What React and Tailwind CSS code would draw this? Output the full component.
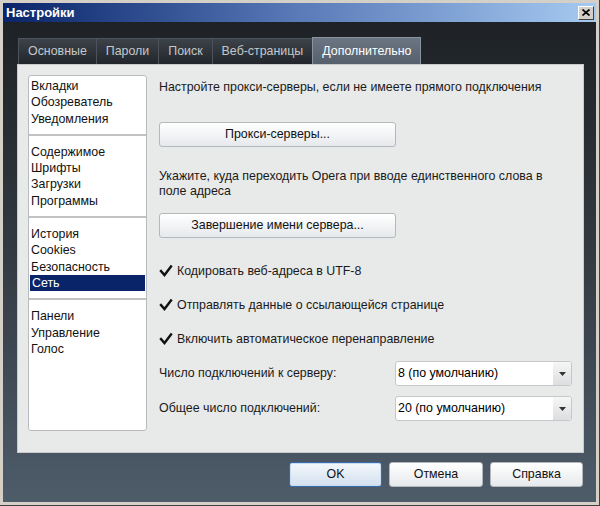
import React from "react";

const font = { fontFamily: '"Liberation Sans", Arial, sans-serif' };

function Tab({ label, active }) {
  return (
    <div
      className={
        active
          ? "h-[28px] -mb-px px-[9px] flex items-center border border-[#8a94a0] border-b-0 bg-gradient-to-b from-[#6c7682] to-[#555f6b] text-white text-[12.4px]"
          : "h-[26px] px-[9px] flex items-center border border-[#4c535c] border-b-0 border-r-0 bg-gradient-to-b from-[#3d434a] to-[#22262b] text-[#c4c8cc] text-[12.4px]"
      }
    >
      {label}
    </div>
  );
}

function Btn({ children, w, primary }) {
  return (
    <div
      className={
        "h-[25px] flex items-center justify-center rounded-[3px] text-[12.4px] text-[#111] border " +
        (primary
          ? "border-[#3a6aa8] bg-gradient-to-b from-[#f4f8fc] to-[#d3e0ef] shadow-[inset_0_0_0_1px_#c8dcf4]"
          : "border-[#b4b8bc] bg-gradient-to-b from-white to-[#e6e9ec]") +
        " " +
        w
      }
    >
      {children}
    </div>
  );
}

function Check({ label }) {
  return (
    <div className="flex items-center h-[20px] -ml-[1px]">
      <svg width="16" height="16" viewBox="0 0 16 16" className="mr-[3px]">
        <path d="M3 8 L6.5 12 L13 3.5" fill="none" stroke="#111" strokeWidth="2.4" strokeLinecap="square" />
      </svg>
      <span className="text-[12.4px] text-[#1a1a1a]">{label}</span>
    </div>
  );
}

function Select({ value }) {
  return (
    <div className="w-[177px] h-[25px] flex rounded-[3px] border border-[#c4c8cc] bg-white">
      <div className="flex-1 flex items-center pl-[2px] text-[12.4px] text-black">{value}</div>
      <div className="w-[18px] flex items-center justify-center bg-gradient-to-b from-[#f6f6f6] to-[#dcdee0] rounded-r-[3px]">
        <svg width="7" height="4" viewBox="0 0 7 4">
          <path d="M0 0 H7 L3.5 4 Z" fill="#333" />
        </svg>
      </div>
    </div>
  );
}

const groups = [
  ["Вкладки", "Обозреватель", "Уведомления"],
  ["Содержимое", "Шрифты", "Загрузки", "Программы"],
  ["История", "Cookies", "Безопасность", "Сеть"],
  ["Панели", "Управление", "Голос"],
];

export default function App() {
  return (
    <div style={font} className="w-[600px] h-[506px] bg-[#d4d0c8] p-[3px] flex flex-col border-r border-b border-[#404040]">
      <div className="h-[19px] flex items-center justify-between bg-gradient-to-r from-[#0a246a] via-[#5a7ab8] to-[#a6caf0] pl-[3px] pr-[2px]">
        <span className="text-white font-bold text-[13px]">Настройки</span>
        <div className="w-[16px] h-[14px] bg-[#d4d0c8] border border-t-white border-l-white border-r-[#404040] border-b-[#404040] flex items-center justify-center">
          <svg width="8" height="7" viewBox="0 0 8 7">
            <path d="M0.5 0.5 L7.5 6.5 M7.5 0.5 L0.5 6.5" stroke="#000" strokeWidth="1.6" />
          </svg>
        </div>
      </div>
      <div className="flex-1 flex flex-col bg-gradient-to-b from-[#1e2226] via-[#343b43] to-[#4e5c6a] pt-[14px] pl-[14px] pr-[12px]">
        <div className="flex items-end pl-[1px] h-[28px]">
          <Tab label="Основные" />
          <Tab label="Пароли" />
          <Tab label="Поиск" />
          <Tab label="Веб-страницы" />
          <Tab label="Дополнительно" active />
        </div>
        <div className="h-[389px] bg-[#e8e9e9] border border-[#c8cacc] flex p-[10px]">
          <div className="w-[119px] h-[356px] bg-white border border-[#b8bcc0] rounded-[3px] flex flex-col">
            {groups.map((g, i) => (
              <div key={i} className={"flex flex-col pb-[7px] " + (i === 0 ? "pt-[2px] " : "pt-[3px] ") + (i < 3 ? "border-b-2 border-[#c0c2c4] mb-[5px]" : "")}>
                {g.map((it) => (
                  <div
                    key={it}
                    className={
                      "h-[16.3px] leading-[16px] text-[12.4px] pl-[2px] " +
                      (it === "Сеть" ? "bg-[#0a246a] text-white mx-[1px] pl-[1px]" : "text-[#111]")
                    }
                  >
                    {it}
                  </div>
                ))}
              </div>
            ))}
          </div>
          <div className="flex-1 pl-[12px] flex flex-col text-[12.4px] text-[#1a1a1a]">
            <div className="mt-[3px] h-[16px]">Настройте прокси-серверы, если не имеете прямого подключения</div>
            <div className="mt-[28px]">
              <Btn w="w-[237px]">Прокси-серверы...</Btn>
            </div>
            <div className="mt-[22px] leading-[15px] w-[400px]">
              Укажите, куда переходить Opera при вводе единственного слова в поле адреса
            </div>
            <div className="mt-[14px]">
              <Btn w="w-[237px]">Завершение имени сервера...</Btn>
            </div>
            <div className="mt-[23px] flex flex-col gap-[14px]">
              <Check label="Кодировать веб-адреса в UTF-8" />
              <Check label="Отправлять данные о ссылающейся странице" />
              <Check label="Включить автоматическое перенаправление" />
            </div>
            <div className="mt-[12px] flex items-center justify-between pr-[1px]">
              <span>Число подключений к серверу:</span>
              <Select value="8 (по умолчанию)" />
            </div>
            <div className="mt-[10px] flex items-center justify-between pr-[1px]">
              <span>Общее число подключений:</span>
              <Select value="20 (по умолчанию)" />
            </div>
          </div>
        </div>
        <div className="flex justify-end gap-[7px] mt-[9px] pr-[1px]">
          <Btn w="w-[93px]" primary>OK</Btn>
          <Btn w="w-[94px]">Отмена</Btn>
          <Btn w="w-[93px]">Справка</Btn>
        </div>
      </div>
    </div>
  );
}
